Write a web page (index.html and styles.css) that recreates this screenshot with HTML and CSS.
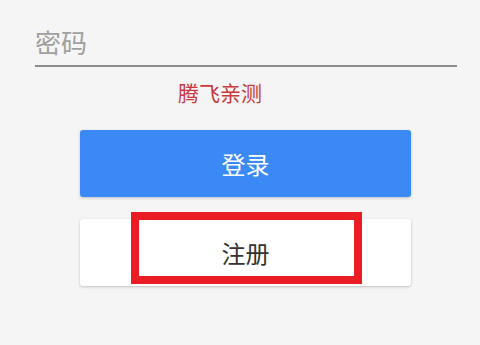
FILE: index.html
```html
<!DOCTYPE html>
<html lang="zh">
<head>
<meta charset="utf-8">
<link rel="stylesheet" href="styles.css">
</head>
<body>
<div class="page">
  <div class="field"><span class="placeholder">密码</span></div>
  <div class="note">腾飞亲测</div>
  <div class="btn btn-primary">登录</div>
  <div class="btn btn-secondary">注册<div class="highlight"></div></div>
</div>
</body>
</html>
```
FILE: styles.css
```css
html, body {
  margin: 0;
  padding: 0;
  background: #f5f5f5;
  font-family: Roboto, "Noto Sans CJK SC", sans-serif;
}
.page {
  width: 480px;
  height: 345px;
  padding-top: 26px;
  box-sizing: border-box;
}
.field {
  margin-left: 35px;
  width: 422px;
  height: 39px;
  border-bottom: 2px solid #8d8d8d;
  box-sizing: content-box;
}
.placeholder {
  display: block;
  font-size: 26px;
  line-height: 36px;
  color: #a0a0a0;
}
.note {
  margin-left: 178px;
  margin-top: 12px;
  font-size: 21px;
  line-height: 30px;
  color: #c8393b;
}
.btn {
  position: relative;
  margin-left: 80px;
  width: 331px;
  height: 67px;
  border-radius: 3px;
  display: flex;
  align-items: center;
  justify-content: center;
  font-size: 24px;
  box-shadow: 0 1px 3px rgba(0,0,0,0.22);
}
.btn-primary {
  margin-top: 21px;
  background: #3a89f5;
  color: #ffffff;
}
.btn-secondary {
  margin-top: 22px;
  background: #ffffff;
  color: #333333;
}
.highlight {
  position: absolute;
  left: 51px;
  top: -7px;
  width: 231px;
  height: 72px;
  border: 8px solid #ec1c24;
  box-sizing: border-box;
}
```
